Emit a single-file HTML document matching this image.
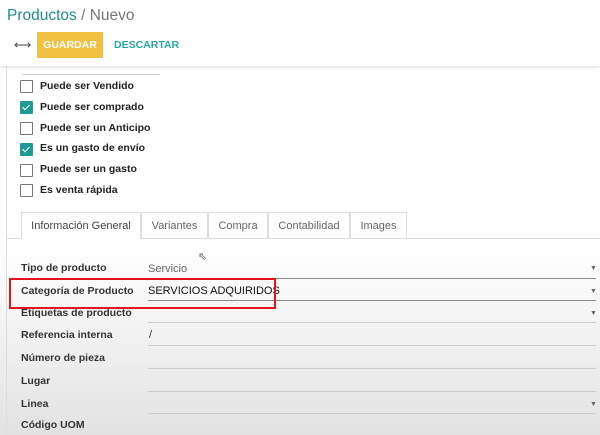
<!DOCTYPE html><html><head><style>
body{margin:0;width:600px;height:435px;overflow:hidden;font-family:"Liberation Sans",sans-serif;background:linear-gradient(#fff 0,#fff 240px,#f4f4f4 320px,#e2e2e2 435px);position:relative}
.a{position:absolute;white-space:nowrap}
.cb{position:absolute;left:20px;width:11px;height:11px;border:1px solid #777;background:#fff;border-radius:1px}
.cb.on{background:#1f9a94;border-color:#1f9a94}
.cb.on:after{content:"";position:absolute;left:3px;top:1px;width:3px;height:6px;border:solid #fff;border-width:0 1.5px 1.5px 0;transform:rotate(45deg)}
.cl{position:absolute;left:40px;font-size:10.5px;font-weight:bold;color:#222}
.lab{position:absolute;left:21px;font-size:10.5px;font-weight:bold;color:#333}
.ln{position:absolute;left:148px;width:448px;height:1px;background:#ccc}
.ar{position:absolute;left:590px;font-size:7px;color:#666}
.tab{position:absolute;top:212px;height:26px;border:1px solid #ddd;border-bottom:none;font-size:11px;color:#666;text-align:center;line-height:26px;box-sizing:border-box;background:#fff}
</style></head><body>
<div class="a" style="left:0;top:0;width:600px;height:66px;background:#fff;box-shadow:0 1px 3px rgba(0,0,0,.15);z-index:2"></div>
<div class="a" style="left:7px;top:7px;font-size:15.5px;color:#1f8c87;z-index:3">Productos <span style="color:#777">/ Nuevo</span></div>
<div class="a" style="left:14px;top:38px;font-size:12px;color:#444;z-index:3">⟷</div>
<div class="a" style="left:37px;top:32px;width:66px;height:26px;background:#f0c040;color:#fff;font-size:10.5px;font-weight:bold;text-align:center;line-height:26px;z-index:3">GUARDAR</div>
<div class="a" style="left:114px;top:39px;font-size:10.5px;font-weight:bold;color:#2aa5a0;z-index:3">DESCARTAR</div>
<div class="a" style="left:6px;top:66px;width:1px;height:369px;background:#ddd"></div>
<div class="a" style="left:22px;top:74px;width:138px;height:1px;background:#ccc"></div>
<div class="cb" style="top:80px"></div><div class="cl" style="top:80px">Puede ser Vendido</div>
<div class="cb on" style="top:101px"></div><div class="cl" style="top:101px">Puede ser comprado</div>
<div class="cb" style="top:122px"></div><div class="cl" style="top:122px">Puede ser un Anticipo</div>
<div class="cb on" style="top:143px"></div><div class="cl" style="top:142px">Es un gasto de envío</div>
<div class="cb" style="top:164px"></div><div class="cl" style="top:163px">Puede ser un gasto</div>
<div class="cb" style="top:184px"></div><div class="cl" style="top:184px">Es venta rápida</div>
<div class="a" style="left:7px;top:238px;width:593px;height:1px;background:#ddd"></div>
<div class="tab" style="left:21px;width:120px;color:#444;height:27px">Información General</div>
<div class="tab" style="left:141px;width:67px">Variantes</div>
<div class="tab" style="left:208px;width:60px">Compra</div>
<div class="tab" style="left:268px;width:82px">Contabilidad</div>
<div class="tab" style="left:350px;width:57px">Images</div>
<div class="a" style="left:198px;top:250px;font-size:11px;color:#666">⇖</div>
<div class="lab" style="top:262px">Tipo de producto</div><div class="a" style="left:148px;top:263px;font-size:11px;color:#666">Servicio</div>
<div class="ln" style="top:278px;background:#888"></div><div class="ar" style="top:265px">▼</div>
<div class="lab" style="top:285px">Categoría de Producto</div><div class="a" style="left:148px;top:285px;font-size:11px;color:#111">SERVICIOS ADQUIRIDOS</div>
<div class="ln" style="top:300px;background:#888"></div><div class="ar" style="top:288px">▼</div>
<div class="a" style="left:9px;top:278px;width:263px;height:27px;border:2px solid #e0161b"></div>
<div class="lab" style="top:307px">Etiquetas de producto</div><div class="ln" style="top:322px"></div><div class="ar" style="top:310px">▼</div>
<div class="lab" style="top:329px">Referencia interna</div><div class="a" style="left:149px;top:329px;font-size:11px;color:#333">/</div><div class="ln" style="top:345px"></div>
<div class="lab" style="top:352px">Número de pieza</div><div class="ln" style="top:368px"></div>
<div class="lab" style="top:375px">Lugar</div><div class="ln" style="top:391px"></div>
<div class="lab" style="top:398px">Linea</div><div class="ln" style="top:413px"></div><div class="ar" style="top:401px">▼</div>
<div class="lab" style="top:419px">Código UOM</div>
</body></html>
